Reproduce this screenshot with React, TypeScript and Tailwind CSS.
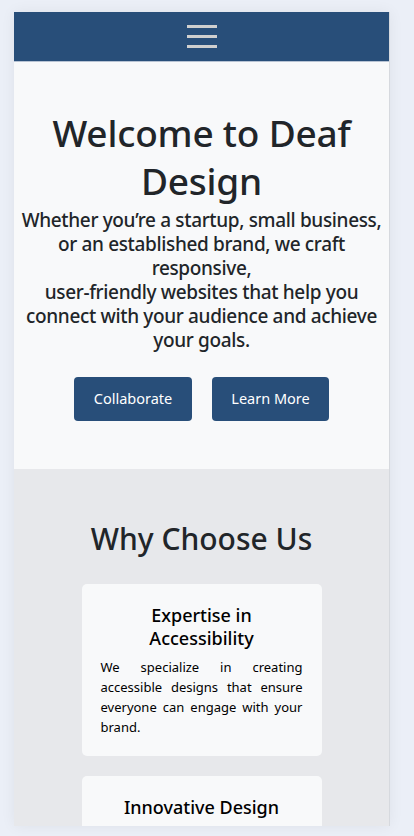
import React from "react";

const features = [
  {
    title: "Expertise in Accessibility",
    body: "We specialize in creating accessible designs that ensure everyone can engage with your brand.",
  },
  {
    title: "Innovative Design",
    body: "Our team blends creativity with usability to build modern websites that stand out.",
  },
];

export default function App() {
  return (
    <div className="min-h-screen bg-[#ebeff7] pt-[12px] pl-[14px] font-['Noto_Sans',sans-serif] text-[#212529]">
      <div className="w-[376px] h-[814px] overflow-hidden border-r border-[#d6d9de] bg-[#f8f9fa] shadow-[0_0_14px_rgba(0,0,0,0.06)]">
        {/* Navbar */}
        <header className="h-[50px] bg-[#284e79] border-b border-[#b7c3d3] flex items-center justify-center">
          <button aria-label="menu" className="flex flex-col gap-[7px]">
            <span className="block w-[30px] h-[3px] bg-[#cfcfcf]" />
            <span className="block w-[30px] h-[3px] bg-[#cfcfcf]" />
            <span className="block w-[30px] h-[3px] bg-[#cfcfcf]" />
          </button>
        </header>

        {/* Hero */}
        <section className="bg-[#f8f9fa] px-[6px] pt-[47px] pb-[48px] text-center">
          <h1 className="text-[37px] leading-[48px] font-medium tracking-[-0.2px]">Welcome to Deaf Design</h1>
          <p className="mt-[3px] text-[19px] leading-[24px] font-medium tracking-[-0.35px]">
            Whether you’re a startup, small business, or an established brand, we craft responsive,
            <br />
            user-friendly websites that help you connect with your audience and achieve your goals.
          </p>
          <div className="mt-[25px] flex justify-center gap-[20px]">
            <button className="w-[118px] h-[44px] rounded-[4px] bg-[#284e79] text-white text-[14.5px]">Collaborate</button>
            <button className="w-[117px] h-[44px] rounded-[4px] bg-[#284e79] text-white text-[14.5px]">Learn More</button>
          </div>
        </section>

        {/* Why choose us */}
        <section className="bg-[#e7e8eb] pt-[51px] pb-[48px] flex flex-col items-center">
          <h2 className="text-[30px] leading-[38px] font-medium">Why Choose Us</h2>
          <div className="mt-[26px] flex flex-col gap-[20px]">
            {features.map((f) => (
              <div key={f.title} className="w-[240px] rounded-[5px] bg-[#f8f9fa] px-[19px] pt-[20px] pb-[19px]">
                <h3 className="text-center text-[18px] leading-[23px] font-medium text-black">{f.title}</h3>
                <p className="mt-[7px] text-[13px] leading-[20px] text-justify text-black">{f.body}</p>
              </div>
            ))}
          </div>
        </section>
      </div>
    </div>
  );
}
